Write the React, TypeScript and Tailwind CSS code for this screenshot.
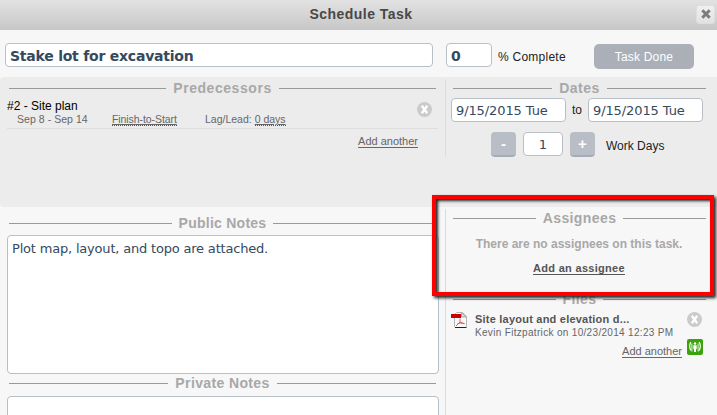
import React, { useState } from 'react';
import clsx from 'clsx';

interface SectionTitleProps {
  title: string;
  className?: string;
}

function SectionTitle({ title, className }: SectionTitleProps) {
  return (
    <div className={clsx('flex h-[18px] items-center gap-[7px]', className)}>
      <span className="h-px flex-1 bg-[#999]" />
      <h2 className="text-[14px] leading-[18px] font-bold whitespace-nowrap text-[#a8a8a8]">{title}</h2>
      <span className="h-px flex-1 bg-[#999]" />
    </div>
  );
}

function RemoveButton({ className }: { className?: string }) {
  return (
    <button className={clsx('h-[15px] w-[15px] shrink-0', className)} title="Remove">
      <svg viewBox="0 0 15 15" className="block h-[15px] w-[15px]">
        <circle cx="7.5" cy="7.5" r="7.5" fill="#cbcbcb" />
        <path d="M4.800 3.800l5.400 7.400M10.200 3.800l-5.400 7.400" stroke="#fff" strokeWidth="2.300" />
      </svg>
    </button>
  );
}

function PdfIcon() {
  return (
    <svg viewBox="0 0 16 16" className="h-4 w-4 shrink-0">
      <path d="M3.500 15V2.500l2-2h6l4 4V15" fill="#fafafa" stroke="#b5b5b5" />
      <path d="M10.500 .5v4.500h5z" fill="#ddd" stroke="#a5a5a5" />
      <path d="M4 15.500h11.500" stroke="#222" />
      <path d="M0 2h10v4H0z" fill="#c90000" />
      <path d="M9 6.500v3.500l-4 4M9 10l4.500 1.700M6 12.200l3-1.200 4.500.7" fill="none" stroke="#f04b4b" strokeWidth=".9" />
    </svg>
  );
}

function SharedIcon() {
  return (
    <svg viewBox="0 0 16 16" className="h-4 w-4 shrink-0">
      <rect width="16" height="16" rx="2" fill="#39a30b" />
      <circle cx="8" cy="4.500" r="1.200" fill="#fff" />
      <path d="M6.300 6.200h3.400V10H9v3H7v-3h-.7z" fill="#fff" />
      <path d="M3.800 3Q1.500 7 3.800 11.500M12.200 3Q14.500 7 12.200 11.500" fill="none" stroke="#fff" strokeWidth="1.200" />
      <path d="M4.900 4.500v8M11.100 4.500v8" stroke="#fff" strokeWidth=".9" />
    </svg>
  );
}

const inputStyle = 'rounded-[4px] border border-[#b9bfc6] bg-white text-[#34495e] outline-none';
const stepStyle =
  'h-[25px] w-[25px] rounded-[4px] border-b-2 border-[#a7adb5] bg-[#b9bec6] text-[15px] leading-[22px] font-bold text-white';

export default function App() {
  const [taskName, setTaskName] = useState('Stake lot for excavation');
  const [percent, setPercent] = useState('0');
  const [startDate, setStartDate] = useState('9/15/2015 Tue');
  const [endDate, setEndDate] = useState('9/15/2015 Tue');
  const [workDays, setWorkDays] = useState(1);
  const [publicNotes, setPublicNotes] = useState('Plot map, layout, and topo are attached.');
  const [privateNotes, setPrivateNotes] = useState('');

  return (
    <div className="relative h-[415px] w-[717px] overflow-hidden bg-[#f7f7f7] font-['Liberation_Sans',Arial,sans-serif] text-[12px] text-[#222]">
      {/* Title bar */}
      <header className="flex h-[30px] items-center bg-linear-to-b from-[#e2e2e2] to-[#c7c7c7] pr-[2px] pl-[21px]">
        <h1 className="flex-1 pb-[2px] pl-[5px] text-center text-[14px] font-bold tracking-[0.47px] text-[#484848]">
          Schedule Task
        </h1>
        <button className="mb-[2px] flex h-[19px] w-[19px] items-center justify-center rounded-[3px] border border-[#dedede] bg-linear-to-b from-[#f0f0f0] to-[#e2e2e2]" title="Close">
          <svg viewBox="0 0 10 10" className="h-[10px] w-[10px]">
            <path d="M1.300 1.300l7.400 7.400M8.700 1.300l-7.400 7.400" stroke="#7c7c7c" strokeWidth="3" />
          </svg>
        </button>
      </header>

      {/* Task name and progress */}
      <div className="flex h-[47px] items-start pt-[13px] pl-[5px]">
        <input
          value={taskName}
          onChange={(e) => setTaskName(e.target.value)}
          className={clsx(inputStyle, "h-6 w-[428px] pt-px pl-[4px] font-['DejaVu_Sans',Verdana,sans-serif] text-[14px] font-bold tracking-[-0.23px]")}
        />
        <input
          value={percent}
          onChange={(e) => setPercent(e.target.value)}
          className={clsx(inputStyle, "ml-[13px] h-6 w-[46px] pt-px pl-[4px] font-['DejaVu_Sans',Verdana,sans-serif] text-[14px] font-bold")}
        />
        <span className="ml-[6px] w-24 pt-[5px] leading-[18px] tracking-[0.25px]">% Complete</span>
        <button className="mt-px h-[25px] w-[100px] rounded-[5px] bg-[#abb0b8] text-[12px] tracking-[0.2px] text-white">Task Done</button>
      </div>

      {/* Predecessors and dates */}
      <div className="flex h-[130px] rounded-l-[4px] bg-[#ececec]">
        <section className="w-[445px] pt-[2px]">
          <SectionTitle title="Predecessors" className="mr-[9px] ml-[9px] tracking-[0.55px]" />
          <div className="mr-[7px] ml-[7px] flex h-[32px] border-b border-[#ddd]">
            <div className="flex-1">
              <div className="pt-[2px] leading-[14px] text-black">#2 - Site plan</div>
              <div className="flex pl-[10px] text-[10.500px] leading-[12px] text-[#666]">
                <span className="w-[95px] tracking-[0.05px]">Sep 8 - Sep 14</span>
                <span className="w-[93px]">
                  <a className="inline-block h-[13px] border-b border-dotted border-[#555] tracking-[-0.08px] underline underline-offset-1">Finish-to-Start</a>
                </span>
                <span>
                  Lag/Lead: <a className="inline-block h-[13px] border-b border-dotted border-[#555] underline underline-offset-1">0 days</a>
                </span>
              </div>
            </div>
            <RemoveButton className="mt-[5px] mr-[6px]" />
          </div>
          <div className="pt-[5px] pr-[27px] text-right text-[11px] leading-[15px] text-[#666]">
            <a className="underline underline-offset-2">Add another</a>
          </div>
        </section>

        <section className="mt-[2px] h-[78px] flex-1 border-l border-[#dcdcdc]">
          <SectionTitle title="Dates" className="mr-[11px] ml-[7px] tracking-[0.45px]" />
          <div className="mt-px flex items-center pl-[5px]">
            <input
              value={startDate}
              onChange={(e) => setStartDate(e.target.value)}
              className={clsx(inputStyle, "h-6 w-[115px] pl-[4px] font-['DejaVu_Sans',Verdana,sans-serif] text-[13px] tracking-[-0.1px]")}
            />
            <span className="w-[22px] text-center">to</span>
            <input
              value={endDate}
              onChange={(e) => setEndDate(e.target.value)}
              className={clsx(inputStyle, "h-6 w-[115px] pl-[4px] font-['DejaVu_Sans',Verdana,sans-serif] text-[13px] tracking-[-0.1px]")}
            />
          </div>
          <div className="mt-[10px] flex pl-[45px]">
            <button className={stepStyle} onClick={() => setWorkDays(Math.max(1, workDays - 1))}>-</button>
            <input
              value={workDays}
              onChange={(e) => setWorkDays(Number(e.target.value))}
              className={clsx(inputStyle, "mx-[7px] h-6 w-10 text-center font-['DejaVu_Sans',Verdana,sans-serif] text-[13px]")}
            />
            <button className={stepStyle} onClick={() => setWorkDays(workDays + 1)}>+</button>
            <span className="ml-[11px] pt-[5px] leading-[18px]">Work Days</span>
          </div>
        </section>
      </div>

      {/* Notes, assignees and files */}
      <div className="flex h-[208px]">
        <section className="w-[445px] pt-[7px]">
          <SectionTitle title="Public Notes" className="mr-[9px] ml-[9px] tracking-[0.25px]" />
          <textarea
            value={publicNotes}
            onChange={(e) => setPublicNotes(e.target.value)}
            className={clsx(inputStyle, "mt-[3px] ml-[7px] block h-[139px] w-[432px] resize-none px-[4px] pt-[4px] font-['DejaVu_Sans',Verdana,sans-serif] text-[13px] leading-[18px] tracking-[-0.19px]")}
          />
          <SectionTitle title="Private Notes" className="mr-[9px] ml-[9px] tracking-[0.37px]" />
          <textarea
            value={privateNotes}
            onChange={(e) => setPrivateNotes(e.target.value)}
            className={clsx(inputStyle, 'mt-[4px] ml-[7px] block h-[139px] w-[432px] resize-none')}
          />
        </section>

        <section className="mt-[2px] flex-1 border-l border-[#dcdcdc]">
          <SectionTitle title="Assignees" className="mr-[11px] ml-[7px] tracking-[0.4px]" />
          <div className="h-[63px] pr-[5px] text-center font-bold">
            <p className="pt-[9px] leading-[16px] text-[#a8a8a8]">There are no assignees on this task.</p>
            <a className="mt-[8px] inline-block text-[11px] leading-[16px] tracking-[0.3px] text-[#555] underline underline-offset-2">Add an assignee</a>
          </div>
          <SectionTitle title="Files" className="mr-[11px] ml-[7px] tracking-[0.4px]" />
          <div className="mt-[4px] flex pl-[5px]">
            <PdfIcon />
            <div className="ml-[8px] w-[212px]">
              <div className="text-[11px] leading-[15px] font-bold tracking-[0.22px] text-[#555]">Site layout and elevation d...</div>
              <div className="text-[10px] leading-[11px] tracking-[0.32px] text-[#666]">Kevin Fitzpatrick on 10/23/2014 12:23 PM</div>
            </div>
            <RemoveButton />
          </div>
          <div className="mt-px flex items-start justify-end gap-[5px] pr-[14px] text-[11px] text-[#666]">
            <a className="mt-[4px] leading-[16px] underline underline-offset-2">Add another</a>
            <SharedIcon />
          </div>
        </section>
      </div>

      {/* Callout around the assignees panel */}
      <div className="pointer-events-none absolute top-[195px] left-[432px] h-[101px] w-[282px] border-4 border-[#fe0000] shadow-[2px_2px_3px_#222,inset_2px_2px_3px_#222]" />
    </div>
  );
}
